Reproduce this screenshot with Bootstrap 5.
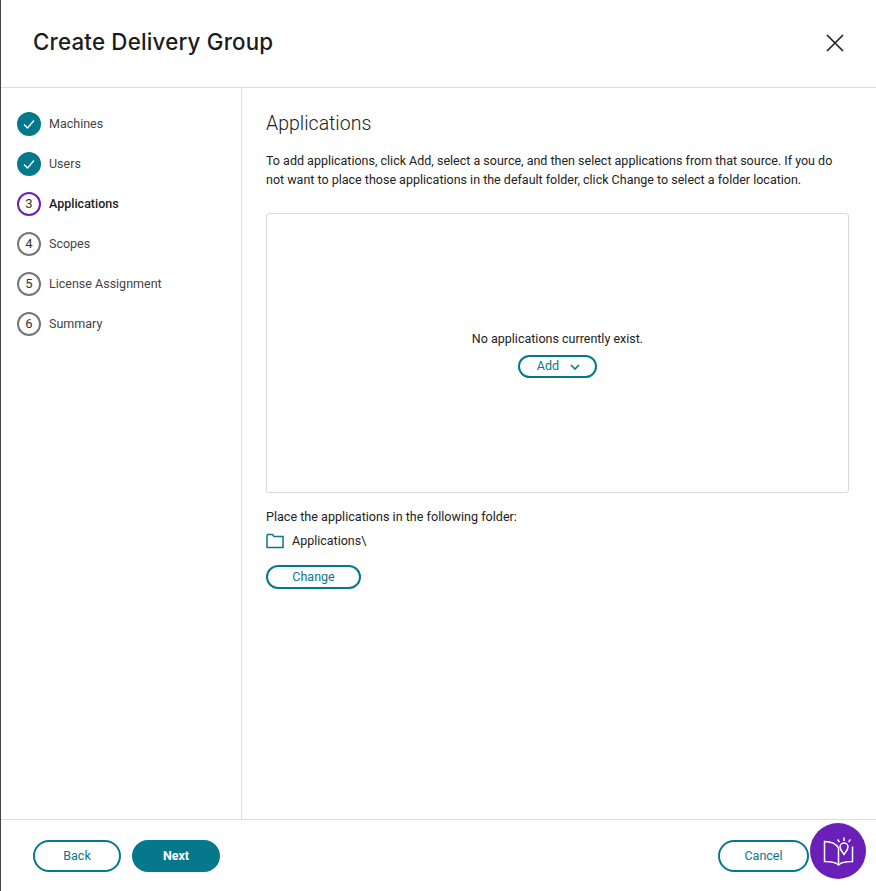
<!doctype html>
<html lang="en">
<head>
<meta charset="utf-8">
<meta name="viewport" content="width=device-width, initial-scale=1">
<title>Create Delivery Group</title>
<link href="https://cdn.jsdelivr.net/npm/bootstrap@5.3.3/dist/css/bootstrap.min.css" rel="stylesheet">
<style>
html, body { height: 100%; margin: 0; }
body { font-family: Roboto, "Liberation Sans", sans-serif; font-size: 13px; color: #222; background: #fff; }
.dlg { height: 891px; border-left: 1px solid #444; position: relative; overflow: hidden; }
.dlg-head { height: 88px; border-bottom: 1px solid #ddd; padding-left: 32px; padding-right: 31px; padding-bottom: 2px; }
.dlg-title { font-family: Inter, Roboto, sans-serif; font-size: 22.3px; font-weight: 500; color: #1c1c1c; margin: 0; letter-spacing: .2px; }
.close-x { background: none; border: 0; padding: 0; line-height: 0; }
.dlg-mid { height: 731px; }
.side { width: 241px; border-right: 1px solid #ddd; padding: 16px 0 0 16px; flex: none; }
.step { height: 40px; gap: 8px; color: #444; font-size: 12.5px; }
.step.now { color: #1c1c1c; font-weight: 500; }
.dot { width: 24px; height: 24px; border-radius: 50%; border: 2px solid #767676; font-size: 13px; color: #333; flex: none; }
.dot.done { background: #06788c; border-color: #06788c; }
.dot.cur { border-color: #6a1fb8; }
.pane { padding: 25px 27px 0 24px; flex: 1; min-width: 0; }
.pane-title { font-size: 19.5px; font-weight: 300; line-height: 22px; margin: 0 0 16px; color: #222; }
.pane-text { line-height: 19px; margin: 0 0 24px; font-size: 12.5px; }
.apps-box { height: 280px; border: 1px solid #d9d9d9; border-radius: 3px; padding-top: 116px; font-size: 12.5px; margin-bottom: 15px; }
.apps-box p { margin: 0 0 8px; line-height: 17px; }
.pill { border: 2px solid #06788c; border-radius: 16px; background: #fff; color: #06788c; font-size: 12.5px; line-height: 1; padding: 0; }
.pill:hover { background: #fff; color: #06788c; border-color: #06788c; }
.pill-sm { height: 24px; }
.pill-add { width: 79px; margin-left: 251px; gap: 11px; height: 23px; padding-left: 2px; }
.pill-change { width: 95px; }
.folder-lab { line-height: 17px; margin: 0 0 7px; font-size: 12.6px; }
.folder-row { gap: 8px; margin-bottom: 15px; height: 18px; font-size: 12.5px; }
.dlg-foot { height: 72px; border-top: 1px solid #ddd; padding: 20px 67px 0 32px; }
.foot-left { gap: 11px; }
.pill-lg { width: 88px; height: 32px; }
.pill-fill, .pill-fill:hover { background: #06788c; color: #fff; font-weight: 700; }
.pill-cancel { width: 91px; }
.help-fab { position: absolute; left: 809px; top: 823px; width: 56px; height: 56px; border-radius: 50%; background: #6a1fb8; }
</style>
</head>
<body>
<div class="dlg d-flex flex-column">
  <div class="dlg-head d-flex align-items-center justify-content-between">
    <h1 class="dlg-title">Create Delivery Group</h1>
    <button class="close-x" type="button" aria-label="Close">
      <svg width="20" height="20" viewBox="0 0 20 20"><path d="M2 2 18 18M18 2 2 18" stroke="#222" stroke-width="1.7" fill="none"/></svg>
    </button>
  </div>
  <div class="dlg-mid d-flex">
    <div class="side">
      <div class="step d-flex align-items-center">
        <span class="dot done d-flex align-items-center justify-content-center"><svg width="14" height="14" viewBox="0 0 14 14"><path d="M2 7.5 5.5 11 12 3.5" stroke="#fff" stroke-width="1.3" fill="none"/></svg></span>Machines
      </div>
      <div class="step d-flex align-items-center">
        <span class="dot done d-flex align-items-center justify-content-center"><svg width="14" height="14" viewBox="0 0 14 14"><path d="M2 7.5 5.5 11 12 3.5" stroke="#fff" stroke-width="1.3" fill="none"/></svg></span>Users
      </div>
      <div class="step now d-flex align-items-center"><span class="dot cur d-flex align-items-center justify-content-center fw-normal">3</span>Applications</div>
      <div class="step d-flex align-items-center"><span class="dot d-flex align-items-center justify-content-center">4</span>Scopes</div>
      <div class="step d-flex align-items-center"><span class="dot d-flex align-items-center justify-content-center">5</span>License Assignment</div>
      <div class="step d-flex align-items-center"><span class="dot d-flex align-items-center justify-content-center">6</span>Summary</div>
    </div>
    <div class="pane">
      <h2 class="pane-title">Applications</h2>
      <p class="pane-text">To add applications, click Add, select a source, and then select applications from that source. If you do not want to place those applications in the default folder, click Change to select a folder location.</p>
      <div class="apps-box">
        <p class="text-center">No applications currently exist.</p>
        <button class="btn pill pill-add d-flex align-items-center justify-content-center" type="button">Add
          <svg width="10" height="6" viewBox="0 0 10 6"><path d="M1 1 5 5 9 1" stroke="#06788c" stroke-width="1.6" fill="none"/></svg>
        </button>
      </div>
      <p class="folder-lab">Place the applications in the following folder:</p>
      <div class="folder-row d-flex align-items-center">
        <svg width="18" height="16" viewBox="0 0 18 16"><path d="M1 3V14.500H17V3.500H8L6.500 1.500H1.500Z" stroke="#06788c" stroke-width="1.500" fill="none"/></svg>
        Applications\
      </div>
      <button class="btn pill pill-sm pill-change" type="button">Change</button>
    </div>
  </div>
  <div class="dlg-foot d-flex justify-content-between">
    <div class="foot-left d-flex align-items-start">
      <button class="btn pill pill-lg" type="button">Back</button>
      <button class="btn pill pill-lg pill-fill" type="button">Next</button>
    </div>
    <button class="btn pill pill-lg pill-cancel" type="button">Cancel</button>
  </div>
  <div class="help-fab d-flex align-items-center justify-content-center">
    <svg width="32" height="32" viewBox="0 0 32 32" fill="none" stroke="#fff" stroke-width="1.500">
      <path d="M16.500 13C14 8.500 9 6.500 2.500 6.500V26.500C9 26.500 13.500 27 16.500 30C19.500 27 24 26.500 30.500 26.500V11.500"/>
      <path d="M16.500 13V30"/>
      <path d="M22 19.500C20 16.500 18 14.500 18 12A4 4 0 0 1 26 12C26 14.500 24 16.500 22 19.500Z"/>
      <path d="M22 2.500V6M15.500 4.500 17.500 7M28.500 4.500 26.500 7"/>
    </svg>
  </div>
</div>
<script src="https://cdn.jsdelivr.net/npm/bootstrap@5.3.3/dist/js/bootstrap.bundle.min.js"></script>
</body>
</html>
